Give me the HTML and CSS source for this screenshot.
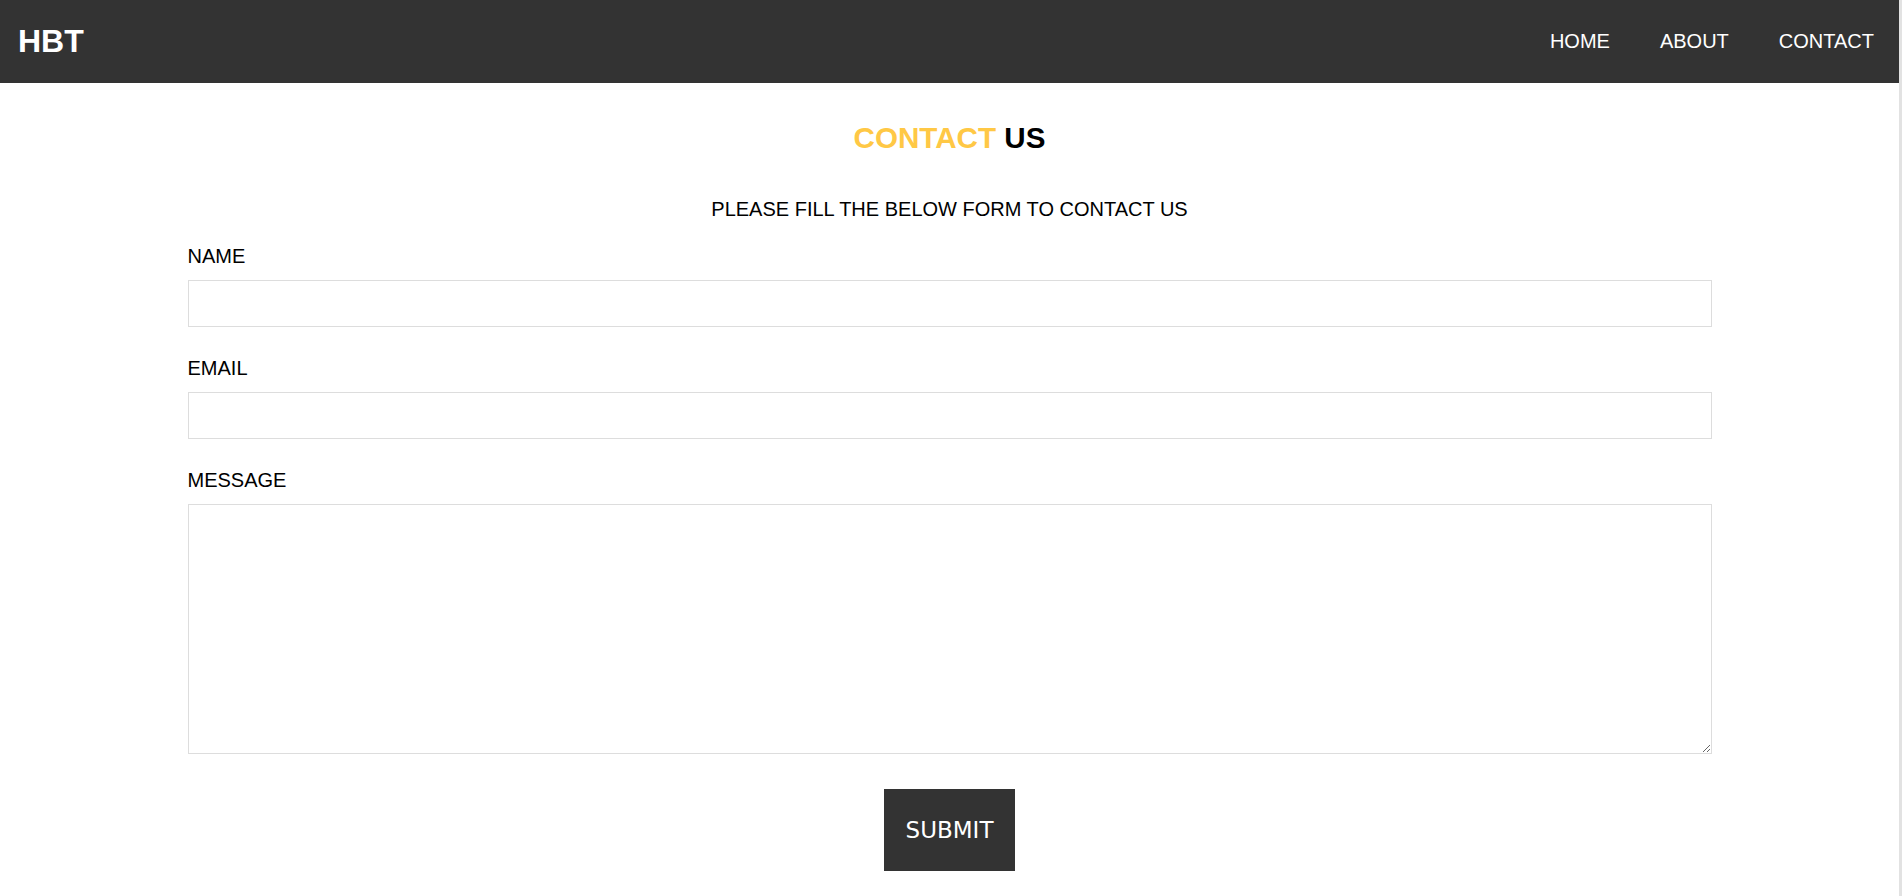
FILE: index.html
```html
<!DOCTYPE html>
<html lang="en">
<head>
<meta charset="utf-8">
<title>Contact Us - HBT</title>
<link rel="stylesheet" href="styles.css">
</head>
<body>
<nav class="navbar">
  <div class="brand">HBT</div>
  <ul class="nav-links">
    <li><a href="#">HOME</a></li>
    <li><a href="#">ABOUT</a></li>
    <li><a href="#">CONTACT</a></li>
  </ul>
</nav>
<main class="contact">
  <h2 class="title"><span class="accent">CONTACT</span> US</h2>
  <p class="subtitle">PLEASE FILL THE BELOW FORM TO CONTACT US</p>
  <form class="form">
    <div class="field">
      <label class="label" for="name">NAME</label>
      <input class="input" id="name" type="text">
    </div>
    <div class="field">
      <label class="label" for="email">EMAIL</label>
      <input class="input" id="email" type="email">
    </div>
    <div class="field">
      <label class="label" for="message">MESSAGE</label>
      <textarea class="textarea" id="message"></textarea>
    </div>
    <button class="submit" type="button">SUBMIT</button>
  </form>
</main>
</body>
</html>
```
FILE: styles.css
```css
* {
  box-sizing: border-box;
}

body {
  margin: 0;
  font-family: "Liberation Sans", Arial, sans-serif;
  color: #000;
  background: #fff;
  border-right: 3px solid #e2e2e2;
}

.navbar {
  height: 83px;
  background: #333;
  display: flex;
  align-items: center;
  justify-content: space-between;
  padding-left: 18px;
}

.brand {
  color: #fff;
  font-size: 32px;
  font-weight: bold;
}

.nav-links {
  list-style: none;
  display: flex;
  margin: 0;
  padding: 0;
}

.nav-links a {
  display: block;
  color: #fff;
  text-decoration: none;
  font-size: 20px;
  padding: 0 25px;
}

.contact {
  padding: 38px 0 143px;
}

.title {
  margin: 0;
  text-align: center;
  font-size: 29.6px;
  font-weight: bold;
  line-height: 34px;
}

.accent {
  color: #ffc845;
}

.subtitle {
  margin: 43px 0 0;
  text-align: center;
  font-size: 20px;
  line-height: 23px;
}

.form {
  width: 1524px;
  margin: 24px auto 0;
  display: flex;
  flex-direction: column;
  gap: 30px;
}

.field {
  display: flex;
  flex-direction: column;
}

.label {
  font-size: 20px;
  line-height: 23px;
  margin-bottom: 12px;
}

.input {
  height: 47px;
  border: 1px solid #ddd;
  padding: 0 10px;
  font-size: 18px;
  font-family: inherit;
  outline: none;
}

.textarea {
  height: 250px;
  border: 1px solid #ddd;
  padding: 10px;
  font-size: 18px;
  font-family: inherit;
  outline: none;
}

.submit {
  align-self: center;
  width: 131px;
  height: 82px;
  margin-top: 5px;
  border: none;
  background: #333;
  color: #fff;
  font-family: "Comic Sans MS", "DejaVu Sans", sans-serif;
  font-size: 23px;
  cursor: pointer;
}
```
